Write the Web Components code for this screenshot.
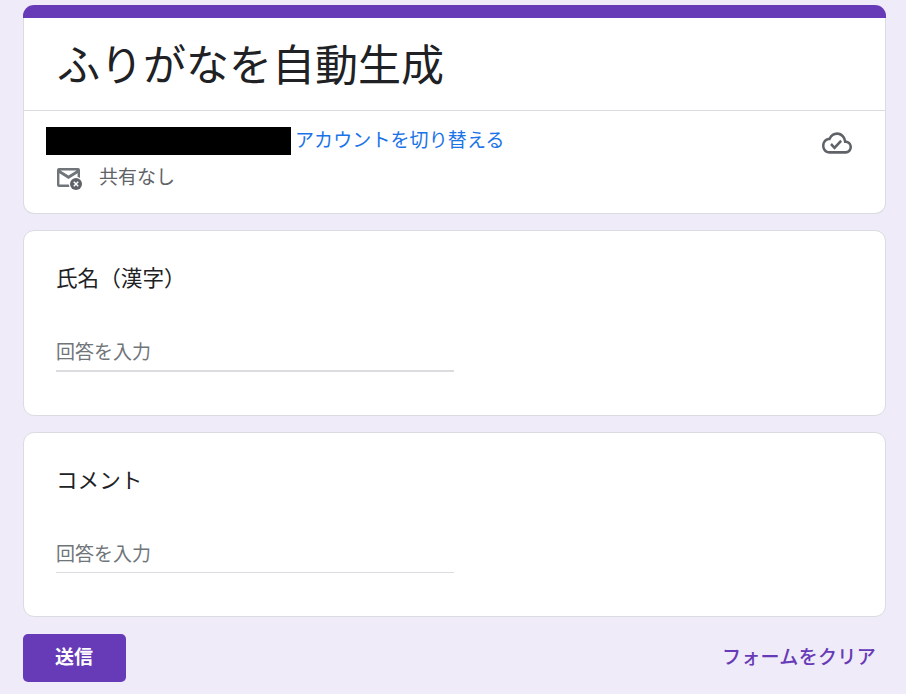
<!DOCTYPE html>
<html lang="ja">
<head>
<meta charset="utf-8">
<title>ふりがなを自動生成</title>
<style>
    html, body { margin: 0; height: 100%; overflow: hidden; }
    body {
        background: #f0ebf8;
        color: #202124;
        font-family: "Noto Sans CJK JP", "Noto Sans", sans-serif;
    }
</style>
</head>
<body>
<form-page>
    <form-header title-text="ふりがなを自動生成"></form-header>
    <form-question label="氏名（漢字）" placeholder="回答を入力" strong></form-question>
    <form-question label="コメント" placeholder="回答を入力"></form-question>
    <form-actions></form-actions>
</form-page>

<script>
class FormPage extends HTMLElement {
    constructor() {
        super();
        this.attachShadow({ mode: 'open' });
        this.shadowRoot.innerHTML = `
            <style>
                :host {
                    display: flex;
                    flex-direction: column;
                    gap: 16px;
                    box-sizing: border-box;
                    width: 906px;
                    padding: 5px 20px 0 23px;
                }
            </style>
            <slot></slot>
        `;
    }
}

class FormHeader extends HTMLElement {
    constructor() {
        super();
        this.attachShadow({ mode: 'open' });
    }

    connectedCallback() {
        this.shadowRoot.innerHTML = `
            <style>
                :host {
                    display: block;
                    box-sizing: border-box;
                    height: 209px;
                    background: #fff;
                    border: 1px solid #dadce0;
                    border-top: 0;
                    border-radius: 11px;
                }
                .bar {
                    height: 13px;
                    margin: 0 -1px;
                    background: #673ab7;
                    border-radius: 11px 11px 0 0;
                }
                h1 {
                    margin: 0;
                    box-sizing: border-box;
                    height: 93px;
                    padding: 12px 32px 0 33px;
                    border-bottom: 1px solid #dadce0;
                    font-size: 43px;
                    font-weight: 400;
                    line-height: 64px;
                    color: #202124;
                }
                .account {
                    display: flex;
                    justify-content: space-between;
                    height: 31px;
                    padding: 16px 33px 0 22px;
                }
                .who {
                    display: flex;
                    align-items: center;
                    gap: 4px;
                    height: 28px;
                }
                .redact { width: 245px; height: 28px; background: #000; }
                a {
                    color: #1a73e8;
                    font-size: 19px;
                    line-height: 28px;
                    padding-bottom: 4px;
                    letter-spacing: .1px;
                    text-decoration: none;
                }
                .cloud { display: block; width: 30px; height: 32px; fill: #5f6368; }
                .shared {
                    display: flex;
                    align-items: center;
                    gap: 16px;
                    padding: 4px 0 0 33px;
                    font-size: 19px;
                    line-height: 28px;
                    color: #5f6368;
                }
                .mail { display: block; width: 26px; height: 26px; margin: 4px 0 -4px; }
            </style>
            <div class="bar"></div>
            <h1>${this.getAttribute('title-text')}</h1>
            <div class="account">
                <div class="who">
                    <div class="redact"></div>
                    <a href="#">アカウントを切り替える</a>
                </div>
                <svg class="cloud" viewBox="0 0 24 24" preserveAspectRatio="none"><path d="M19.35 10.04C18.67 6.59 15.64 4 12 4 9.11 4 6.6 5.64 5.35 8.04 2.34 8.36 0 10.91 0 14c0 3.31 2.69 6 6 6h13c2.76 0 5-2.24 5-5 0-2.64-2.05-4.78-4.65-4.96zM19 18H6c-2.21 0-4-1.79-4-4 0-2.05 1.53-3.76 3.56-3.97l1.07-.11.5-.95C8.08 7.14 9.94 6 12 6c2.62 0 4.88 1.86 5.39 4.43l.3 1.5 1.53.11c1.56.1 2.78 1.41 2.78 2.96 0 1.65-1.35 3-3 3zm-9-3.82l-2.09-2.09L6.5 13.5 10 17l6.01-6.01-1.41-1.41z"/></svg>
            </div>
            <div class="shared">
                <svg class="mail" viewBox="1 0 26 26">
                    <path d="M3 1h19a2 2 0 0 1 2 2v15a2 2 0 0 1-2 2H3a2 2 0 0 1-2-2V3a2 2 0 0 1 2-2zm1.4 2.4 8.1 5.2 8.1-5.2zM3.4 6.2v11.4h18.2V6.2l-9.1 5.8z" fill="#70757a" fill-rule="evenodd"/>
                    <circle cx="20" cy="17" r="7.2" fill="#fff"/>
                    <circle cx="20" cy="17" r="6" fill="#5f6368"/>
                    <path d="M17.8 14.8l4.4 4.4M22.2 14.8l-4.4 4.4" stroke="#fff" stroke-width="1.5"/>
                </svg>
                <span>共有なし</span>
            </div>
        `;
    }
}

class FormQuestion extends HTMLElement {
    constructor() {
        super();
        this.attachShadow({ mode: 'open' });
    }

    connectedCallback() {
        this.shadowRoot.innerHTML = `
            <style>
                :host {
                    display: block;
                    padding: 30px 32px 43px 32px;
                    background: #fff;
                    border: 1px solid #dadce0;
                    border-radius: 11px;
                }
                .label {
                    font-size: 21.6px;
                    line-height: 32px;
                    color: #202124;
                }
                .field {
                    width: 398px;
                    height: 39px;
                    margin-top: 38px;
                    font-size: 19px;
                    line-height: 40px;
                    color: #70757a;
                    border-bottom: 1px solid #dadce0;
                }
                :host([strong]) .field { border-bottom-width: 2px; }
            </style>
            <div class="label">${this.getAttribute('label')}</div>
            <div class="field">${this.getAttribute('placeholder')}</div>
        `;
    }
}

class FormActions extends HTMLElement {
    constructor() {
        super();
        this.attachShadow({ mode: 'open' });
        this.shadowRoot.innerHTML = `
            <style>
                :host {
                    display: flex;
                    justify-content: space-between;
                    align-items: center;
                    margin-top: 1px;
                }
                button {
                    font: inherit;
                    border: 0;
                    cursor: pointer;
                    font-size: 19px;
                    font-weight: 500;
                }
                .submit {
                    width: 103px;
                    height: 48px;
                    padding: 0 1px 6px 0;
                    background: #673ab7;
                    color: #fff;
                    border-radius: 5px;
                    font-weight: 700;
                }
                .clear {
                    background: none;
                    color: #673ab7;
                    padding: 0 10px 6px 0;
                    letter-spacing: .33px;
                }
            </style>
            <button class="submit">送信</button>
            <button class="clear">フォームをクリア</button>
        `;
    }
}

customElements.define('form-page', FormPage);
customElements.define('form-header', FormHeader);
customElements.define('form-question', FormQuestion);
customElements.define('form-actions', FormActions);
</script>
</body>
</html>
